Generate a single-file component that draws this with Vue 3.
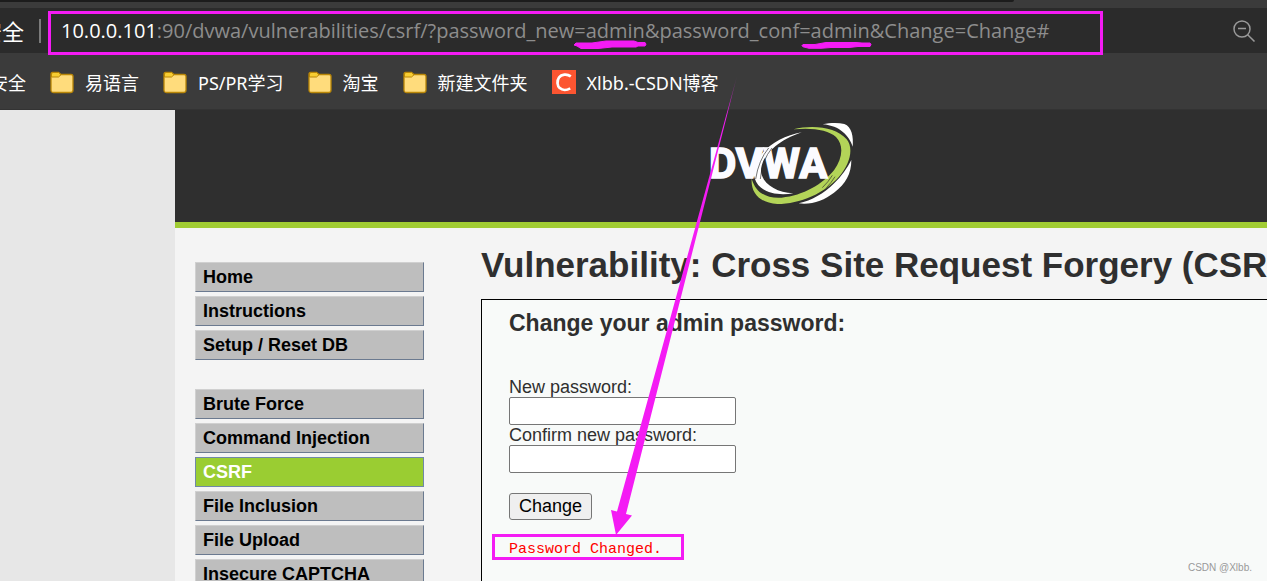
<script setup>
import { ref } from 'vue'

const setupLinks = ['Home', 'Instructions', 'Setup / Reset DB']
const attackLinks = ['Brute Force', 'Command Injection', 'CSRF', 'File Inclusion', 'File Upload', 'Insecure CAPTCHA']
const bookmarks = ['易语言', 'PS/PR学习', '淘宝', '新建文件夹']
const active = ref('CSRF')
const newPassword = ref('')
const confirmPassword = ref('')
</script>

<template>
  <div class="window">
    <div class="tabs"><div class="tab-strip"></div></div>
    <div class="address">
      <div class="security"><span>安全</span></div>
      <div class="divider"></div>
      <div class="url"><b>10.0.0.101</b>:90/dvwa/vulnerabilities/csrf/?password_new=admin&amp;password_conf=admin&amp;Change=Change#</div>
      <button class="zoom-out" type="button" aria-label="Zoom out">
        <svg width="24" height="24" viewBox="0 0 24 24" fill="none" stroke="#9a9a9a" stroke-width="1.5">
          <circle cx="10" cy="10" r="8" />
          <path d="M6 9.500h8M15.700 15.700L22.500 22.500" />
        </svg>
      </button>
    </div>
    <nav class="bookmarks">
      <a class="cut" href="#"><span>安全</span></a>
      <a v-for="name in bookmarks" :key="name" href="#">
        <svg width="24" height="24" viewBox="0 0 24 24">
          <path d="M1 5V4q0-1.500 1.500-1.500h6L11 4.500h10q2 0 2 2V20q0 2.500-2.500 2.500h-17Q1 22.500 1 20z" fill="#ffdc7c" stroke="#b98607" stroke-width="1.300" />
          <path d="M1.500 7V4q0-1.500 1.500-1.500h5.500L11 4.800 8.500 7z" fill="#f7cd32" stroke="#b98607" />
        </svg>
        <span>{{ name }}</span>
      </a>
      <a href="#">
        <svg width="24" height="24" viewBox="0 0 24 24">
          <path d="M0 0h24v24H0z" fill="#fc5531" />
          <path d="M18.800 6.300C15 3.600 9.500 4 7 7.600c-2.300 3.300-1.900 8.300.8 10.500 2.600 2.300 7 2.200 10.400.2" fill="none" stroke="#fff" stroke-width="2.700" />
        </svg>
        <span>Xlbb.-CSDN博客</span>
      </a>
    </nav>

    <div class="viewport">
      <div class="container">
        <header>
          <svg width="145" height="87" viewBox="60 30 435 261" role="img" aria-label="DVWA">
            <path d="M335 67C255 80 175 145 194 205C206 247 260 259 310 250C260 247 218 222 213 185C212 140 260 92 335 67Z" fill="#fff" />
            <path d="M310 58C370 43 440 52 470 88C493 117 478 165 447 200C405 249 330 282 262 282C210 279 182 250 185 206C197 248 228 266 275 263C340 257 398 222 432 181C458 145 462 106 438 81C415 59 365 52 310 58Z" fill="#b3d458" />
            <path d="M398 43C420 38 444 37 463 42C485 50 491 80 488 110C478 78 450 47 398 43Z" fill="#fff" />
            <path d="M484 150C484 190 468 222 432 248C402 271 365 285 326 280C365 271 402 250 431 221C455 199 472 174 484 150Z" fill="#fff" />
            <path d="M397 233Q415 216 427 196M407 236Q424 218 435 200" fill="none" stroke="#2f2f2f" stroke-width="2" />
            <text class="logo-text" x="57" y="205">DVWA</text>
            <path d="M236 114Q206 150 197 207M246 114Q216 150 211 207" fill="none" stroke="#2f2f2f" stroke-width="2" />
          </svg>
        </header>
        <div class="columns">
          <nav class="menu">
            <ul>
              <li v-for="item in setupLinks" :key="item"><a href="#">{{ item }}</a></li>
            </ul>
            <ul>
              <li v-for="item in attackLinks" :key="item">
                <a href="#" :class="{ selected: item === active }" @click.prevent="active = item">{{ item }}</a>
              </li>
            </ul>
          </nav>
          <main>
            <h1>Vulnerability: Cross Site Request Forgery (CSRF)</h1>
            <section class="panel">
              <h3>Change your admin password:</h3>
              <form @submit.prevent>
                <label for="new-password">New password:</label>
                <input id="new-password" v-model="newPassword" type="password" />
                <label for="confirm-password">Confirm new password:</label>
                <input id="confirm-password" v-model="confirmPassword" type="password" />
                <button type="submit">Change</button>
              </form>
              <pre>Password Changed.</pre>
            </section>
          </main>
        </div>
      </div>
    </div>

    <svg class="marks" width="1267" height="581" viewBox="0 0 1267 581" aria-hidden="true">
      <defs>
        <linearGradient id="fade" gradientUnits="userSpaceOnUse" x1="736" y1="78" x2="727" y2="115">
          <stop offset="0" stop-color="#f41bf4" stop-opacity="0.200" />
          <stop offset="1" stop-color="#f41bf4" />
        </linearGradient>
      </defs>
      <rect x="49.500" y="12.500" width="1052" height="41" fill="none" stroke="#f41bf4" stroke-width="3" />
      <rect x="493.500" y="535.500" width="189" height="23" fill="none" stroke="#f41bf4" stroke-width="3" />
      <path d="M737 76L617 511.500L611 510L616 535L632 515.500L626 514Z" fill="url(#fade)" />
      <path d="M576 43h16l14-2h28l4 1.500h7q2 1.500 0 3.500h-7l-2 1h-24l-14 1.500h-17l-4-2.500-3-1z" fill="#f41bf4" stroke="#f41bf4" stroke-linejoin="round" />
      <path d="M803 44.500h12l11-2h30l6 .5h8q2 1.500 0 3.500h-12l-9 1h-18l-10 .8h-12l-6-1.500q-2-1.300 0-2.300z" fill="#f41bf4" stroke="#f41bf4" stroke-linejoin="round" />
    </svg>
    <div class="watermark">CSDN @Xlbb.</div>
  </div>
</template>

<style>
html,
body {
  overflow: hidden;
}
</style>

<style scoped>
.window {
  position: relative;
  display: flex;
  flex-direction: column;
  height: 100vh;
  overflow: hidden;
  background: #3b3b3b;
  font-family: "Liberation Sans", Arial, sans-serif;
}
.window * {
  box-sizing: border-box;
}
.tabs {
  flex: none;
  height: 8px;
}
.tab-strip {
  width: 80%;
  height: 2px;
  background: #1c1c1c;
  border-bottom-right-radius: 2px;
}
.address {
  display: flex;
  flex: none;
  align-items: center;
  height: 45px;
  background: #2b2b2b;
  color: #fff;
  font: 20px "Open Sans", "Noto Sans CJK SC", sans-serif;
}
.security {
  display: flex;
  flex: none;
  justify-content: flex-end;
  width: 24px;
  overflow: hidden;
  font-size: 22px;
  line-height: 28px;
  white-space: nowrap;
}
.divider {
  flex: none;
  width: 2px;
  height: 24px;
  margin: 0 20px 0 15px;
  background: #7b7b7b;
}
.url {
  flex: 1;
  color: #8d8d8d;
  line-height: 28px;
  white-space: nowrap;
}
.url b {
  color: #fff;
  font-weight: 400;
}
.zoom-out {
  flex: none;
  width: 24px;
  height: 24px;
  margin-right: 11px;
  padding: 0;
  border: 0;
  background: none;
}
.zoom-out svg {
  display: block;
}
.bookmarks {
  display: flex;
  flex: none;
  align-items: center;
  gap: 24px;
  height: 57px;
  padding-top: 2px;
  border-bottom: 1px solid #333;
  font: 18px "Noto Sans", "Noto Sans CJK SC", sans-serif;
}
.bookmarks a {
  display: flex;
  flex: none;
  align-items: center;
  gap: 11px;
  color: #fff;
  text-decoration: none;
  white-space: nowrap;
}
.bookmarks .cut {
  justify-content: flex-end;
  width: 26px;
  overflow: hidden;
}
.viewport {
  flex: 1;
  min-height: 0;
  padding-left: 175px;
  overflow: hidden;
  background: #e7e7e7;
}
.container {
  display: flex;
  flex-direction: column;
  min-height: 100%;
  margin-right: -122px;
  background: #f4f4f4;
}
header {
  display: flex;
  flex: none;
  justify-content: center;
  height: 118px;
  padding-top: 10px;
  border-bottom: 6px solid #a1cc33;
  background: #2f2f2f;
}
.logo-text {
  fill: #fbfbff;
  stroke: #fbfbff;
  stroke-width: 5px;
  font: 700 126px Roboto, sans-serif;
}
.columns {
  display: flex;
  flex: 1;
}
.menu {
  flex: none;
  width: 229px;
  margin: 34px 57px 0 20px;
}
.menu ul {
  display: flex;
  flex-direction: column;
  gap: 4px;
  margin: 0 0 29px;
  padding: 0;
  list-style: none;
}
.menu a {
  display: block;
  height: 30px;
  padding-left: 7px;
  border: 1px solid;
  border-color: #d0d0d0 #6b7a90 #6b7a90 #d0d0d0;
  background: #bebebe;
  color: #000;
  font-size: 18px;
  font-weight: 700;
  line-height: 28px;
  text-decoration: none;
}
.menu .selected {
  border-color: #7088a8;
  background: #9acd32;
  color: #fff;
}
main {
  display: flex;
  flex: 1;
  flex-direction: column;
  min-width: 0;
  color: #2f2f2f;
}
h1 {
  margin: 17px 0 14px;
  font-size: 35px;
  line-height: 40px;
  white-space: nowrap;
}
.panel {
  flex: 1;
  padding: 10px 27px;
  border: 1px solid #000;
  background: #f8faf9;
}
h3 {
  margin: 0 0 40px;
  font-size: 23px;
  line-height: 27px;
}
form {
  display: flex;
  flex-direction: column;
  align-items: flex-start;
  font-size: 18px;
}
label {
  line-height: 20px;
}
input {
  width: 227px;
  height: 28px;
  border: 1px solid #767676;
  border-radius: 2px;
  background: #fff;
  font-size: 18px;
}
form button {
  height: 27px;
  margin-top: 20px;
  padding: 0 9px;
  border: 1px solid #767676;
  border-radius: 3px;
  background: #efefef;
  color: #000;
  font: 18px "Liberation Sans", Arial, sans-serif;
}
pre {
  margin: 20px 0;
  color: #f00;
  font: 15px/20px "Liberation Mono", monospace;
}
.marks {
  position: absolute;
  top: 0;
  left: 0;
  pointer-events: none;
}
.watermark {
  position: absolute;
  right: 15px;
  bottom: 6px;
  color: #999;
  font-size: 10px;
  line-height: 15px;
}
</style>
